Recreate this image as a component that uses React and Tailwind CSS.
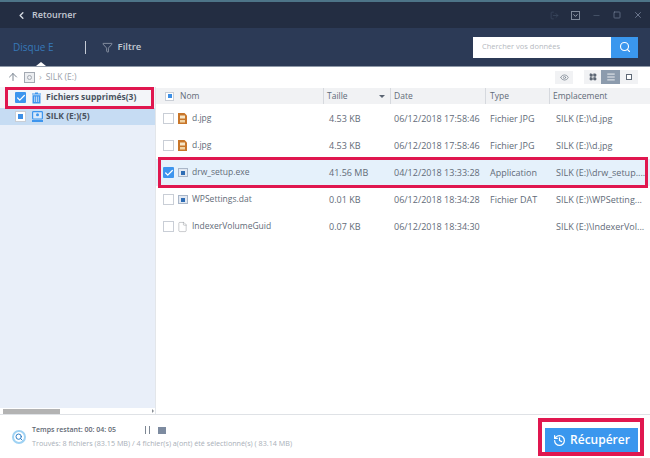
import React from "react";
import { ChevronLeft, Filter, Search, ArrowUp, Eye, Check, History, Minus, Square, X, LayoutGrid, Menu, File, LogOut, ChevronDown } from "lucide-react";

const rows = [
  { name: "d.jpg", size: "4.53 KB", date: "06/12/2018 17:58:46", type: "Fichier JPG", path: "SILK (E:)\\d.jpg", icon: "jpg" },
  { name: "d.jpg", size: "4.53 KB", date: "06/12/2018 17:58:46", type: "Fichier JPG", path: "SILK (E:)\\d.jpg", icon: "jpg" },
  { name: "drw_setup.exe", size: "41.56 MB", date: "04/12/2018 13:33:28", type: "Application", path: "SILK (E:)\\drw_setup....", icon: "app", checked: true },
  { name: "WPSettings.dat", size: "0.01 KB", date: "06/12/2018 18:34:28", type: "Fichier DAT", path: "SILK (E:)\\WPSetting...", icon: "app" },
  { name: "IndexerVolumeGuid", size: "0.07 KB", date: "06/12/2018 18:34:30", type: "", path: "SILK (E:)\\IndexerVol...", icon: "file" },
];

function CheckBox({ checked, partial }) {
  if (checked) {
    return (
      <span className="flex h-[11px] w-[11px] shrink-0 items-center justify-center rounded-[1px] bg-[#3d95ee]">
        <Check size={10} strokeWidth={3} color="#fff" />
      </span>
    );
  }
  return (
    <span className="flex h-[11px] w-[11px] shrink-0 items-center justify-center border border-[#c9ced6] bg-white">
      {partial && <span className="h-[5px] w-[5px] bg-[#3d8fe6]" />}
    </span>
  );
}

function RowIcon({ kind }) {
  if (kind === "jpg") {
    return (
      <svg width="9" height="11" viewBox="0 0 9 11">
        <path d="M0 0H6.5L9 2.5V11H0Z" fill="#c8762a" />
        <rect x="2" y="2.5" width="5" height="3" fill="#f6e6c8" />
        <rect x="2" y="7" width="5" height="2.5" fill="#f0d3a4" />
      </svg>
    );
  }
  if (kind === "app") {
    return (
      <span className="flex h-[9px] w-[10px] items-center justify-center border border-[#a9b6c8] bg-[#e3e9f2]">
        <span className="h-[4px] w-[4px] bg-[#2e6db5]" />
      </span>
    );
  }
  return <File size={12} strokeWidth={1} color="#8a8f96" />;
}

function TrashIcon() {
  return (
    <svg width="9" height="12" viewBox="0 0 9 12">
      <path d="M3 0.5H6V1.5H9V2.5H0V1.5H3Z" fill="#3d95ee" />
      <path d="M0.5 3.2H8.5V11.5H0.5Z" fill="#3d95ee" />
      <path d="M2.7 4.5V10M4.5 4.5V10M6.3 4.5V10" stroke="#dfeaf8" strokeWidth="0.8" />
    </svg>
  );
}

function DriveUserIcon() {
  return (
    <svg width="11" height="11" viewBox="0 0 11 11">
      <rect x="0.6" y="0.6" width="9.8" height="7.4" rx="0.8" fill="#d9e9fa" stroke="#3d95ee" strokeWidth="1.2" />
      <circle cx="5.5" cy="3.8" r="1.5" fill="#3d95ee" />
      <rect x="0" y="9" width="11" height="2" fill="#3d95ee" />
    </svg>
  );
}

export default function App() {
  return (
    <div className="relative flex h-[458px] w-[650px] flex-col overflow-hidden bg-white font-['Open_Sans',sans-serif] text-[9px] text-[#626b78]">
      <div className="h-[2px] bg-[#4d7488]" />

      <div className="flex h-[26px] items-center bg-[#232d42] pl-[16px] pr-[7px]">
        <ChevronLeft size={11} strokeWidth={3} color="#d5dae2" />
        <span className="ml-[5px] text-[9px] font-semibold text-[#c3c9d3]">Retourner</span>
        <div className="ml-auto flex items-center gap-[12px]">
          <LogOut size={9} color="#3c4a60" />
          <span className="flex h-[9px] w-[9px] items-center justify-center border border-[#7f899a]">
            <ChevronDown size={7} strokeWidth={3} color="#a9b1bf" />
          </span>
          <Minus size={9} color="#4f5c72" />
          <Square size={8} color="#77839a" />
          <X size={10} color="#77839a" />
        </div>
      </div>

      <div className="relative flex h-[38px] items-center bg-[#2c3a56] pl-[13px] pr-[12px]">
        <span className="text-[10px] text-[#3678b8]">Disque E</span>
        <span className="ml-[31px] h-[13px] w-px bg-[#c5cbd5]" />
        <Filter size={11} strokeWidth={1.25} color="#c3c9d3" className="ml-[16px]" />
        <span className="ml-[5px] text-[9.5px] font-semibold text-[#c3c9d3]">Filtre</span>
        <div className="ml-auto flex h-[21px] w-[165px]">
          <div className="flex flex-1 items-center bg-white pl-[9px] text-[7.5px] text-[#b5b9c0]">Chercher vos données</div>
          <div className="flex w-[27px] items-center justify-center bg-[#3a97ee]">
            <Search size={12} strokeWidth={2.25} color="#fff" />
          </div>
        </div>
        <span className="absolute bottom-0 left-[36px] h-0 w-0 border-x-[5px] border-b-[4px] border-x-transparent border-b-white" />
      </div>

      <div className="h-px bg-[#8f99a8]" />

      <div className="flex h-[20px] items-center pl-[7px] pr-[12px]">
        <ArrowUp size={12} strokeWidth={2} color="#7d8793" />
        <span className="ml-[5px] flex h-[11px] w-[11px] items-center justify-center border border-[#a3a9b2] bg-[#eceef1]">
          <span className="h-[5px] w-[5px] rounded-full border border-[#a3a9b2]" />
        </span>
        <span className="ml-[4px] text-[#a9aeb6]">›</span>
        <span className="ml-[4px] text-[8.5px] text-[#9aa0a9]">SILK (E:)</span>
        <div className="ml-auto flex items-center">
          <span className="mr-[11px] flex h-[13px] w-[18px] items-center justify-center bg-[#f1f2f4]">
            <Eye size={9} color="#7d8793" />
          </span>
          <span className="flex h-[14px] w-[17px] items-center justify-center bg-[#f1f2f4]">
            <LayoutGrid size={8} fill="#5e6875" color="#5e6875" />
          </span>
          <span className="flex h-[14px] w-[19px] items-center justify-center bg-[#8c9bad]">
            <Menu size={10} color="#fff" />
          </span>
          <span className="flex h-[14px] w-[18px] items-center justify-center bg-[#f1f2f4]">
            <span className="h-[6px] w-[6px] border border-[#5e6875] bg-white" />
          </span>
        </div>
      </div>

      <div className="flex min-h-0 flex-1">
        <aside className="flex w-[155px] flex-col bg-[#e9eff9]">
          <div className="flex h-[21px] items-center bg-[#f3f5f9] pl-[15px] font-bold text-[#4a5360]">
            <CheckBox checked />
            <span className="ml-[6px] flex"><TrashIcon /></span>
            <span className="ml-[5px] text-[8.5px]">Fichiers supprimés(3)</span>
          </div>
          <div className="flex h-[17px] items-center bg-[#c6dcf3] pl-[15px] font-bold text-[#4a5360]">
            <CheckBox partial />
            <span className="ml-[6px] flex"><DriveUserIcon /></span>
            <span className="ml-[3px] text-[8.5px]">SILK (E:)(5)</span>
          </div>
          <div className="mt-auto flex h-[6px] items-center bg-white">
            <span className="w-[3px]" />
            <span className="h-[5px] w-[57px] bg-[#b3b3b3]" />
            <span className="ml-auto mr-[1px] h-0 w-0 border-y-[2px] border-l-[2px] border-y-transparent border-l-[#8a8f96]" />
          </div>
        </aside>

        <main className="flex-1 border-l border-[#e3e6ea]">
          <div className="mt-px flex h-[16px] items-center bg-[#f1f2f4] text-[8.5px]">
            <div className="flex w-[167px] items-center gap-[6px] pl-[9px]">
              <span className="flex h-[9px] w-[9px] items-center justify-center border border-[#c9ced6] bg-white">
                <span className="h-[4px] w-[4px] bg-[#3d8fe6]" />
              </span>
              <span>Nom</span>
            </div>
            <div className="flex h-full w-[67px] items-center justify-between border-l border-[#d6d9de] pl-[3px] pr-[5px]">
              <span>Taille</span>
              <span className="h-0 w-0 border-x-[3px] border-t-[3px] border-x-transparent border-t-[#5a6472]" />
            </div>
            <div className="flex h-full w-[95px] items-center border-l border-[#d6d9de] pl-[3px]">Date</div>
            <div className="flex h-full w-[64px] items-center border-l border-[#d6d9de] pl-[4px]">Type</div>
            <div className="flex h-full w-[93px] items-center border-l border-[#d6d9de] pl-[3px]">Emplacement</div>
          </div>

          <div className="pt-[1px]">
            {rows.map((r, i) => (
              <div key={i} className={`flex h-[27px] items-center text-[9px] ${r.checked ? "bg-[#e5f1fb]" : ""}`}>
                <div className="flex w-[168px] items-center pl-[7px]">
                  <CheckBox checked={r.checked} />
                  <span className="ml-[3px] flex w-[11px] justify-center"><RowIcon kind={r.icon} /></span>
                  <span className="ml-[4px] text-[8.5px]">{r.name}</span>
                </div>
                <div className="w-[67px] pl-[5px]">{r.size}</div>
                <div className="w-[96px] pl-[3px]">{r.date}</div>
                <div className="w-[65px] pl-[3px]">{r.type}</div>
                <div className="flex-1 whitespace-nowrap pl-[4px]">{r.path}</div>
              </div>
            ))}
          </div>
        </main>
      </div>

      <footer className="flex h-[44px] items-center border-t border-[#dfe2e6] pl-[12px]">
        <span className="relative mt-[1px] flex h-[14px] w-[14px] items-center justify-center rounded-full border-2 border-[#9fd2f3]">
          <Search size={8} strokeWidth={3} color="#2f7fc7" />
        </span>
        <div className="ml-[6px] flex flex-col">
          <div className="flex h-[12px] items-center">
            <span className="w-[113px] text-[7px] font-semibold text-[#5f6873]">Temps restant: 00: 04: 05</span>
            <span className="h-[8px] w-px bg-[#7d8793]" />
            <span className="ml-[3px] h-[8px] w-px bg-[#7d8793]" />
            <span className="ml-[8px] h-[7px] w-[8px] bg-[#7d8ba0]" />
          </div>
          <span className="mt-[2px] whitespace-nowrap text-[7.2px] text-[#a9afb8]">Trouvés: 8 fichiers (83.15 MB) / 4 fichier(s) a(ont) été sélectionné(s) ( 83.14 MB)</span>
        </div>
        <button className="ml-auto mr-[12px] mt-[7px] flex h-[25px] w-[93px] items-center justify-center gap-[4px] bg-[#3a97ee] text-[12px] font-semibold text-white">
          <History size={13} strokeWidth={2.25} color="#fff" />
          Récupérer
        </button>
      </footer>

      {/* red annotation boxes on top of the screenshot */}
      <div className="pointer-events-none absolute left-[5px] top-[87px] h-[22px] w-[149px] border-[3px] border-[#e0174f]" />
      <div className="pointer-events-none absolute left-[158px] top-[157px] h-[31px] w-[490px] border-[3px] border-[#e0174f]" />
      <div className="pointer-events-none absolute left-[538px] top-[418px] h-[38px] w-[106px] border-[4px] border-[#e0174f]" />
    </div>
  );
}
